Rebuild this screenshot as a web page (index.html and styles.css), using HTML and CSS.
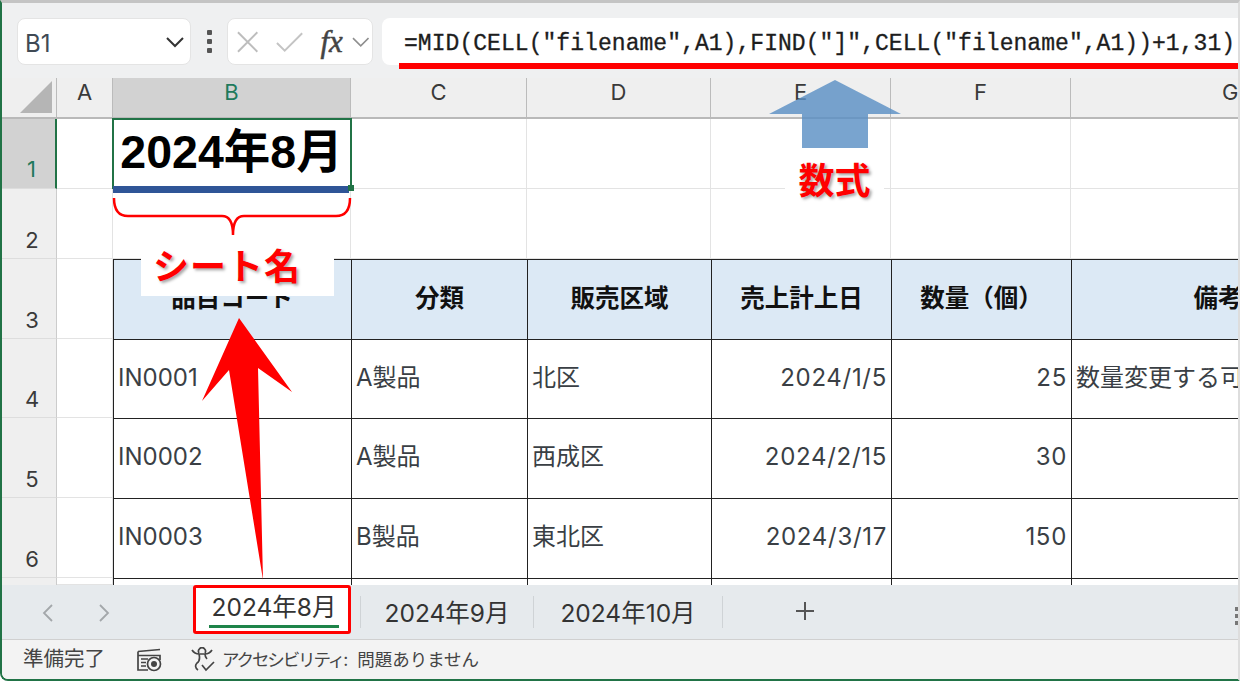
FILE: index.html
```html
<!DOCTYPE html>
<html lang="ja">
<head>
<meta charset="utf-8">
<title>シート名</title>
<link rel="stylesheet" href="styles.css">
</head>
<body>
<div class="app">
  <div class="fbar">
    <div class="namebox"><span>B1</span>
      <svg class="chev" width="18" height="12" viewBox="0 0 18 12"><path d="M1 2l8 8 8-8" fill="none" stroke="#333" stroke-width="2"/></svg>
    </div>
    <div class="vdots"><i></i><i></i><i></i></div>
    <div class="fxbox">
      <svg width="22" height="22" viewBox="0 0 22 22"><path d="M1 1l20 20M21 1L1 21" fill="none" stroke="#bdbdbd" stroke-width="2"/></svg>
      <svg class="chk" width="30" height="24" viewBox="0 0 30 24"><path d="M2 13l8 8L28 3" fill="none" stroke="#c4c4c4" stroke-width="2"/></svg>
      <span class="fx">fx</span>
      <svg width="18" height="12" viewBox="0 0 18 12"><path d="M1 2l8 8 8-8" fill="none" stroke="#8f8f8f" stroke-width="1.6"/></svg>
    </div>
    <div class="formula">=MID(CELL("filename",A1),FIND("]",CELL("filename",A1))+1,31)</div>
  </div>

  <div class="sheet">
    <div class="h corner"><svg width="34" height="34" viewBox="0 0 34 34"><path d="M33 1v32H1z" fill="#b5b5b5"/></svg></div>
    <div class="h">A</div><div class="h sel">B</div><div class="h">C</div><div class="h">D</div><div class="h">E</div><div class="h">F</div><div class="h g">G</div>

    <div class="rh rsel">1</div><div class="c"></div><div class="c active">2024年8月</div><div class="c"></div><div class="c"></div><div class="c"></div><div class="c"></div><div class="c"></div>
    <div class="rh">2</div><div class="c"></div><div class="c"></div><div class="c"></div><div class="c"></div><div class="c"></div><div class="c"></div><div class="c"></div>

    <div class="rh">3</div><div class="c"></div>
    <div class="t th">品目コード</div><div class="t th">分類</div><div class="t th">販売区域</div><div class="t th">売上計上日</div><div class="t th">数量（個）</div><div class="t th">備考</div>

    <div class="rh">4</div><div class="c"></div>
    <div class="t">IN0001</div><div class="t">A製品</div><div class="t">北区</div><div class="t r">2024/1/5</div><div class="t r">25</div><div class="t">数量変更する可能性あり</div>

    <div class="rh">5</div><div class="c"></div>
    <div class="t">IN0002</div><div class="t">A製品</div><div class="t">西成区</div><div class="t r">2024/2/15</div><div class="t r">30</div><div class="t"></div>

    <div class="rh">6</div><div class="c"></div>
    <div class="t">IN0003</div><div class="t">B製品</div><div class="t">東北区</div><div class="t r">2024/3/17</div><div class="t r">150</div><div class="t"></div>

    <div class="rh"></div><div class="c"></div>
    <div class="t"></div><div class="t"></div><div class="t"></div><div class="t"></div><div class="t"></div><div class="t"></div>
  </div>

  <div class="tabs">
    <svg class="nav" width="14" height="20" viewBox="0 0 14 20"><path d="M11 2L3 10l8 8" fill="none" stroke="#a3a7aa" stroke-width="1.8"/></svg>
    <svg class="nav nav2" width="14" height="20" viewBox="0 0 14 20"><path d="M3 2l8 8-8 8" fill="none" stroke="#a3a7aa" stroke-width="1.8"/></svg>
    <div class="tab on">2024年8月</div>
    <div class="tab">2024年9月</div>
    <div class="tab last">2024年10月</div>
    <svg class="plus" width="24" height="24" viewBox="0 0 24 24"><path d="M12 3v18M3 12h18" fill="none" stroke="#555" stroke-width="2"/></svg>
    <div class="edge"><i></i><i></i><i></i></div>
  </div>

  <div class="status">
    <span class="ready">準備完了</span>
    <svg class="rec" width="26" height="24" viewBox="0 0 26 24"><path d="M2 3.5L24 1.5M2 3.5V22h10M2 7.5h22V12M5 11h7M5 14.5h5M5 18h5" fill="none" stroke="#444" stroke-width="1.7"/><circle cx="18" cy="16" r="6.5" fill="#f3f3f3" stroke="#444" stroke-width="1.7"/><circle cx="18" cy="16" r="3" fill="#444"/></svg>
    <svg class="acc" width="27" height="26" viewBox="0 0 27 26"><path d="M9 6a3.5 3.5 0 1 1 6 0M2 3c2 3 4 4 7 4h6c3 0 5-1 7-4M9 7c1 4 1 7-2 9-2 2-2 5 1 7M15 7c0 2 1 4 2 5" fill="none" stroke="#444" stroke-width="1.7"/><path d="M12 18l4 5 8-8" fill="none" stroke="#444" stroke-width="1.7"/></svg>
    <span class="acctext"><span class="kana">アクセシビリティ:</span> 問題ありません</span>
  </div>

  <svg class="marks" width="1240" height="682" viewBox="0 0 1240 682">
    <rect x="399" y="63" width="839" height="6" fill="#ff0000"/>
    <path d="M835 80L901 114H868V148H802V114H769Z" fill="#5b90c4" fill-opacity=".82"/>
    <rect x="113" y="186" width="236" height="7" fill="#2f5597"/>
    <rect x="348" y="185" width="6" height="6" fill="#217346"/>
    <path d="M114 198Q114 216 128 216H222Q233 216 233 235Q233 216 244 216H336Q350 216 350 198" fill="none" stroke="#ff0000" stroke-width="2.5"/>
  </svg>
  <div class="label shiki">数式</div>
  <div class="label sname">シート名</div>
  <svg class="marks" width="1240" height="682" viewBox="0 0 1240 682">
    <path d="M239 318L292 392L258 368L263 580L229 370L202 401Z" fill="#ff0000"/>
  </svg>
</div>
</body>
</html>
```
FILE: styles.css
```css
* { box-sizing: border-box; }
html, body { margin: 0; height: 100%; background: #fff; }
body { width: 1240px; height: 682px; overflow: hidden; font-family: Inter, "Noto Sans CJK JP", sans-serif; color: #333; }

.app {
  position: relative; width: 1240px; height: 681px; display: flex; flex-direction: column;
  border-left: 2px solid #217346; border-bottom: 2px solid #217346; border-top: 3px solid #c4c4c4; border-right: 2px solid #ddd;
  border-bottom-left-radius: 8px; overflow: hidden; background: #f3f3f3;
}

.fbar { height: 75px; flex: none; display: flex; align-items: flex-start; padding-top: 15px; padding-left: 15px; background: #eff0f1; }
.namebox { width: 174px; height: 47px; background: #fff; border: 1px solid #e4e4e4; border-radius: 8px; display: flex; align-items: center; justify-content: space-between; padding: 3px 6px 0 7px; font-size: 24px; color: #404a55; }
.chev { margin-top: -3px; }
.vdots { width: 36px; height: 47px; display: flex; flex-direction: column; align-items: center; justify-content: center; gap: 4px; }
.vdots i { width: 5px; height: 5px; border-radius: 1px; background: #555; }
.fxbox { width: 146px; height: 47px; background: #fff; border: 1px solid #e4e4e4; border-radius: 8px; display: flex; align-items: center; padding: 0 3px 0 9px; }
.chk { margin-left: 17px; }
.fx { font-family: "Liberation Serif", serif; font-style: italic; font-weight: 400; font-size: 31px; line-height: 1; color: #444; width: 32px; margin-left: 16px; -webkit-text-stroke: .5px #444; }
.formula { flex: 1; height: 47px; margin-left: 9px; background: #fff; border-radius: 8px 0 0 8px; padding: 9px 0 0 22px; font: 400 23px/34px "Liberation Mono", monospace; letter-spacing: .05px; color: #1d1d1d; white-space: nowrap; overflow: hidden; -webkit-text-stroke: .3px #1d1d1d; }

.sheet {
  flex: none; height: 507px; display: grid; overflow: hidden; background: #fff;
  grid-template-columns: 55px 56px 238px 176px 184px 180px 180px 293px;
  grid-template-rows: 41px 70px 70px 80px 79px 80px 80px 7px;
}
.h { background: #efefef; border-right: 1px solid #bbb; border-bottom: 2px solid #b9b9b9; font-size: 22px; display: flex; align-items: center; justify-content: center; padding: 0 0 12px 0; color: #3a3a3a; line-height: 1; }
.h.g { justify-content: flex-start; padding-left: 151px; }
.h.sel { background: #d2d2d2; color: #1f7a5c; }
.corner { align-items: flex-end; justify-content: flex-end; padding: 0 3px 3px 0; background: #efefef; }
.rh { background: #efefef; border-right: 1px solid #ccc; border-bottom: 1px solid #ddd; font-size: 22px; line-height: 1; display: flex; align-items: flex-end; justify-content: center; padding-bottom: 7px; padding-left: 6px; color: #3a3a3a; }
.rh.rsel { background: #d2d2d2; color: #1f7a5c; border-right: 2px solid #217346; padding-bottom: 8px; }
.c { border-right: 1px solid #e3e3e3; border-bottom: 1px solid #e3e3e3; }
.active { outline: 2px solid #217346; outline-offset: -1px; font-weight: 700; font-size: 46.5px; line-height: 1; color: #000; display: flex; align-items: center; justify-content: center; padding-bottom: 2px; white-space: nowrap; font-family: "Liberation Sans", "Noto Sans CJK JP", sans-serif; }
.t { border-top: 1px solid #222; border-left: 1px solid #222; font-size: 24px; line-height: 1; display: flex; align-items: center; padding: 0 4px 3px 4px; white-space: nowrap; overflow: hidden; color: #3a3f45; }
.t.th { background: #dce9f5; font-weight: 700; justify-content: center; color: #111; font-size: 24.5px; padding-bottom: 2px; }
.t.r { justify-content: flex-end; letter-spacing: .7px; }

.tabs { flex: none; height: 55px; background: #e6eaed; border-bottom: 1px solid #d0d0d0; display: flex; align-items: flex-start; position: relative; }
.nav { margin: 18px 0 0 39px; flex: none; }
.nav2 { margin-left: 42px; }
.tab { width: 173px; height: 32px; margin-top: 11px; font-size: 24.5px; line-height: 34px; text-align: center; color: #333; border-left: 1px solid #cfd3d6; }
.tab.on { width: 158px; height: 49px; margin: 0 9px 0 82px; background: #fff; border: 3px solid #f00; border-radius: 3px; line-height: 39px; position: relative; padding-left: 4px; }
.tab.on::after { content: ""; position: absolute; left: 13px; right: 9px; bottom: 3px; height: 3px; background: #1e8449; }
.tab.last { width: 190px; border-right: 1px solid #cfd3d6; }
.plus { margin: 14px 0 0 70px; flex: none; }
.edge { position: absolute; right: 0; top: 22px; display: flex; flex-direction: column; gap: 3px; }
.edge i { width: 3px; height: 4px; background: #777; }

.status { flex: 1; display: flex; align-items: center; background: #f3f3f3; padding-left: 21px; font-size: 20.5px; color: #444; line-height: 1; }
.rec { margin-left: 31px; }
.acc { margin-left: 28px; }
.acctext { margin-left: 5px; font-size: 17.5px; white-space: nowrap; }
.kana { letter-spacing: -2.1px; margin-right: 6px; }

.marks { position: absolute; left: -2px; top: -3px; pointer-events: none; }
.label { position: absolute; background: #fff; color: #f00; font-weight: 700; text-align: center; text-shadow: 2px 2px 3px rgba(0,0,0,.35); white-space: nowrap; font-family: "Noto Sans CJK JP", sans-serif; }
.shiki { left: 783px; top: 155px; width: 99px; height: 40px; font-size: 36px; line-height: 40px; }
.sname { left: 139px; top: 238px; width: 193px; height: 55px; font-size: 36px; line-height: 46px; letter-spacing: 1px; padding-right: 21px; }
```
